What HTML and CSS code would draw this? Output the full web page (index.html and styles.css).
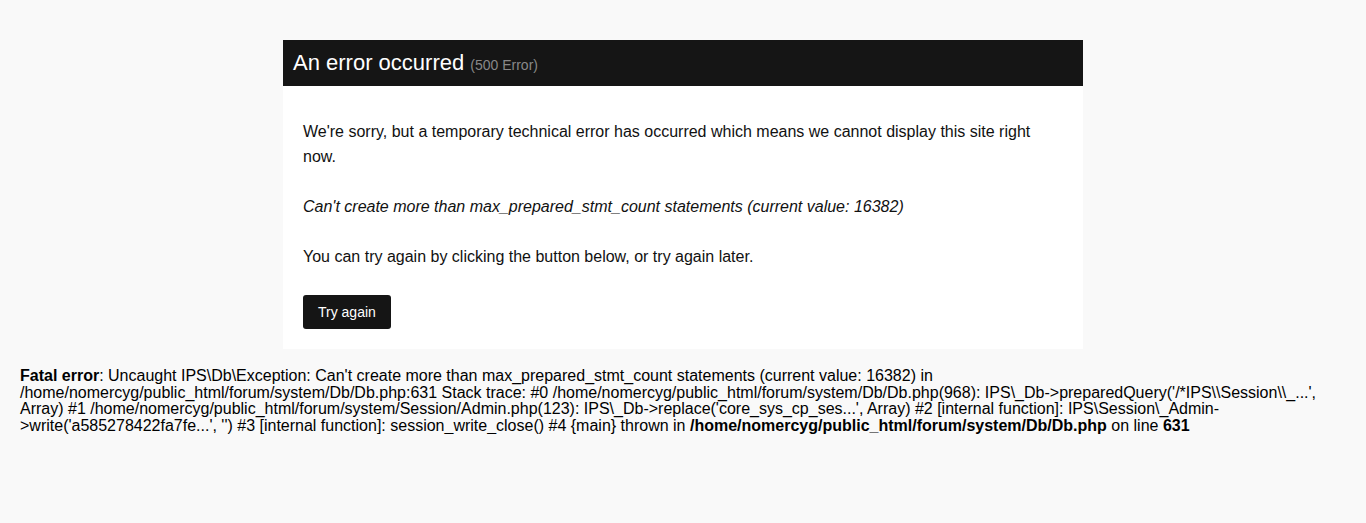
FILE: index.html
```html
<!DOCTYPE html>
<html>
<head>
<meta charset="utf-8">
<title>An error occurred</title>
<link rel="stylesheet" href="styles.css">
</head>
<body>
<div class="error-box">
  <h1 class="error-title">An error occurred <span class="error-code">(500 Error)</span></h1>
  <div class="error-content">
    <p>We're sorry, but a temporary technical error has occurred which means we cannot display this site right now.</p>
    <p><em>Can't create more than max_prepared_stmt_count statements (current value: 16382)</em></p>
    <p>You can try again by clicking the button below, or try again later.</p>
    <a class="button" href="#">Try again</a>
  </div>
</div>
<div class="php-error"><b>Fatal error</b>: Uncaught IPS\Db\Exception: Can't create more than max_prepared_stmt_count statements (current value: 16382) in /home/nomercyg/public_html/forum/system/Db/Db.php:631 Stack trace: #0 /home/nomercyg/public_html/forum/system/Db/Db.php(968): IPS\_Db-&gt;preparedQuery('/*IPS\\Session\\_...', Array) #1 /home/nomercyg/public_html/forum/system/Session/Admin.php(123): IPS\_Db-&gt;replace('core_sys_cp_ses...', Array) #2 [internal function]: IPS\Session\_Admin-&gt;write('a585278422fa7fe...', '') #3 [internal function]: session_write_close() #4 {main} thrown in <b>/home/nomercyg/public_html/forum/system/Db/Db.php</b> on line <b>631</b></div>
</body>
</html>
```
FILE: styles.css
```css
html, body {
  margin: 0;
  padding: 0;
  background: #f9f9f9;
}
body {
  font-family: "Liberation Sans", Arial, sans-serif;
  color: #000;
  padding-top: 40px;
}
.error-box {
  width: 800px;
  margin: 0 auto;
  background: #fff;
}
.error-title {
  margin: 0;
  height: 46px;
  line-height: 46px;
  padding: 0 10px;
  background: #151515;
  color: #fff;
  font-size: 22px;
  font-weight: normal;
}
.error-code {
  font-size: 14px;
  color: #888;
}
.error-content {
  padding: 33px 20px 20px;
  font-size: 16px;
  line-height: 25px;
  color: #111;
}
.error-content p {
  margin: 0 0 25px;
}
.button {
  display: inline-block;
  margin-top: 1px;
  height: 34px;
  line-height: 34px;
  padding: 0 15px;
  background: #151515;
  color: #fff;
  font-size: 14px;
  text-decoration: none;
  border-radius: 3px;
  vertical-align: top;
}
.php-error {
  margin-top: 19px;
  padding: 0 20px;
  font-size: 16px;
  line-height: 16.5px;
  color: #000;
}
```
